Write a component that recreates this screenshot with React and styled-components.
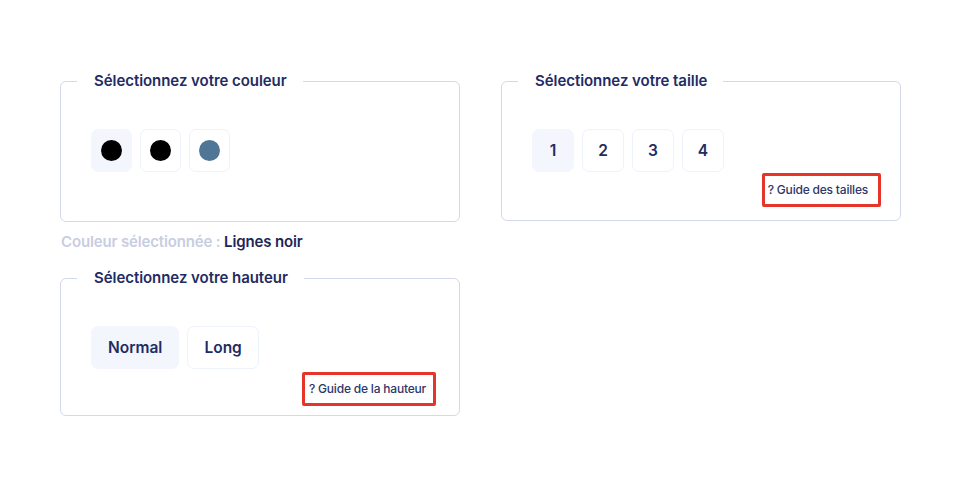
import styled, { createGlobalStyle } from "styled-components";

const GlobalStyle = createGlobalStyle`
  body {
    margin: 0;
    background: #fff;
    font-family: Inter, "Liberation Sans", sans-serif;
  }
`;

const Page = styled.div`
  display: grid;
  grid-template-columns: 400px 400px;
  column-gap: 41px;
  align-items: start;
  padding: 72px 0 0 60px;
`;

const Column = styled.div`
  display: flex;
  flex-direction: column;
`;

const Card = styled.fieldset`
  margin: 0;
  min-width: 0;
  padding: 0 0 ${(p) => p.$padBottom || 10}px;
  border: 1px solid #d3d8ec;
  border-radius: 6px;
`;

const Legend = styled.legend`
  margin-left: 16px;
  padding: 0 16px 0 17px;
  font-size: 15px;
  line-height: 18px;
  font-weight: 600;
  letter-spacing: -0.05px;
  color: #222b63;
`;

const Options = styled.div`
  display: flex;
  gap: 8px;
  padding: 39px 0 0 30px;
`;

const Option = styled.button`
  display: flex;
  align-items: center;
  justify-content: center;
  box-sizing: border-box;
  min-width: ${(p) => p.$size || 42}px;
  height: 43px;
  padding: 0 ${(p) => (p.$wide ? 16 : 0)}px;
  border: 1.5px solid ${(p) => (p.$active ? "#f3f6fd" : "#eef2fc")};
  border-radius: 7px;
  background: ${(p) => (p.$active ? "#f3f6fd" : "#fff")};
  font-family: inherit;
  font-size: 15.5px;
  font-weight: 600;
  letter-spacing: 0;
  color: #222b63;
  cursor: pointer;
`;

const Dot = styled.span`
  width: 21px;
  height: 21px;
  border-radius: 50%;
  background: ${(p) => p.$color};
`;

const GuideRow = styled.div`
  display: flex;
  justify-content: flex-end;
  padding-right: ${(p) => p.$right}px;
  margin-top: ${(p) => p.$top}px;
`;

const Guide = styled.a`
  display: block;
  padding: 8px ${(p) => p.$padRight}px 8px ${(p) => p.$padLeft}px;
  border: 3px solid #e5352a;
  border-radius: 2px;
  font-size: 12px;
  line-height: 12px;
  font-weight: 500;
  letter-spacing: -0.2px;
  color: #2d3769;
  text-decoration: none;
`;

const Caption = styled.p`
  margin: 11px 0 18px 1px;
  font-size: 15px;
  line-height: 18px;
  letter-spacing: -0.15px;
  font-weight: 600;
  color: #c8cde2;

  strong {
    font-weight: 600;
    color: #1d2558;
  }
`;

const colors = ["#000", "#000", "#4f7696"];

const App = () => {
  return (
    <>
      <GlobalStyle />
      <Page>
        <Column>
          <Card $padBottom={49}>
            <Legend>Sélectionnez votre couleur</Legend>
            <Options>
              {colors.map((c, i) => (
                <Option key={i} $size={41} $active={i === 0}>
                  <Dot $color={c} />
                </Option>
              ))}
            </Options>
          </Card>
          <Caption>
            Couleur sélectionnée : <strong>Lignes noir</strong>
          </Caption>
          <Card $padBottom={9}>
            <Legend>Sélectionnez votre hauteur</Legend>
            <Options>
              <Option $active $wide>Normal</Option>
              <Option $wide>Long</Option>
            </Options>
            <GuideRow $right={23} $top={3}>
              <Guide href="#" $padLeft={4} $padRight={7}>? Guide de la hauteur</Guide>
            </GuideRow>
          </Card>
        </Column>
        <Column>
          <Card $padBottom={13}>
            <Legend>Sélectionnez votre taille</Legend>
            <Options>
              {["1", "2", "3", "4"].map((s, i) => (
                <Option key={s} $active={i === 0}>{s}</Option>
              ))}
            </Options>
            <GuideRow $right={19} $top={1}>
              <Guide href="#" $padLeft={3} $padRight={10}>? Guide des tailles</Guide>
            </GuideRow>
          </Card>
        </Column>
      </Page>
    </>
  );
};

export default App;
